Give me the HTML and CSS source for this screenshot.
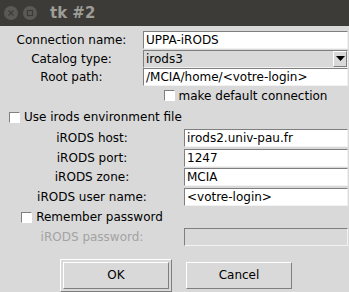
FILE: index.html
```html
<!DOCTYPE html>
<html lang="en">
<head>
<meta charset="utf-8">
<title>tk #2</title>
<link rel="stylesheet" href="styles.css">
</head>
<body>
<div class="window">
  <div class="titlebar">
    <span class="wbtn"><svg width="14" height="14" viewBox="0 0 14 14"><circle cx="7" cy="7" r="7" fill="#5a5955"/><path d="M4.5 4.5 L9.5 9.5 M9.5 4.5 L4.5 9.5" stroke="#3c3b37" stroke-width="1.3"/></svg></span>
    <span class="wbtn"><svg width="14" height="14" viewBox="0 0 14 14"><circle cx="7" cy="7" r="7" fill="#5a5955"/><rect x="4.5" y="4.5" width="5" height="5" fill="none" stroke="#3c3b37" stroke-width="1.2"/></svg></span>
    <span class="title">tk #2</span>
  </div>

  <div class="grid top">
    <label class="lbl">Connection name:</label>
    <div class="entry">UPPA-iRODS</div>
    <label class="lbl">Catalog type:</label>
    <div class="combo"><span>irods3</span><span class="arrow"><svg width="9" height="5" viewBox="0 0 9 5"><path d="M0 0 H9 L4.5 5 Z" fill="#000"/></svg></span></div>
    <label class="lbl">Root path:</label>
    <div class="entry">/MCIA/home/&lt;votre-login&gt;</div>
    <span></span>
    <div class="check center"><span class="box"></span>make default connection</div>
  </div>

  <div class="check env"><span class="box"></span>Use irods environment file</div>

  <div class="grid bottom">
    <label class="lbl">iRODS host:</label>
    <div class="entry">irods2.univ-pau.fr</div>
    <label class="lbl">iRODS port:</label>
    <div class="entry">1247</div>
    <label class="lbl">iRODS zone:</label>
    <div class="entry">MCIA</div>
    <label class="lbl">iRODS user name:</label>
    <div class="entry">&lt;votre-login&gt;</div>
    <div class="check center"><span class="box"></span>Remember password</div>
    <span></span>
    <label class="lbl disabled">iRODS password:</label>
    <div class="entry off"></div>
  </div>

  <div class="buttons">
    <div class="ring"><button class="btn" type="button">OK</button></div>
    <button class="btn" type="button">Cancel</button>
  </div>
</div>
</body>
</html>
```
FILE: styles.css
```css
body { margin: 0; padding: 0; background: #d9d9d9; font-family: "DejaVu Sans", sans-serif; font-size: 12px; color: #000; }

.window { width: 349px; height: 292px; overflow: hidden; background: #d9d9d9; }

/* title bar */
.titlebar { height: 26px; background: #3c3b37; display: flex; align-items: center; padding-left: 4px; }
.wbtn { width: 14px; height: 14px; margin-right: 5px; display: flex; }
.wbtn + .wbtn { margin-right: 0; }
.title { margin-left: 13px; color: #9e9d98; font-weight: bold; font-size: 15px; }

/* grids */
.grid { display: grid; align-items: center; padding-right: 1px; }
.top { grid-template-columns: 143px 1fr; grid-auto-rows: 18.5px; padding-top: 5px; }
.bottom { grid-template-columns: 184px 1fr; grid-auto-rows: 19.8px; margin-top: 1px; }

.lbl { text-align: center; line-height: 18px; white-space: nowrap; }
.lbl.disabled { color: #a3a3a3; }

.entry { height: 18px; box-sizing: border-box; background: #fff; border: 1px solid; border-color: #7f7f7f #f2f2f2 #f2f2f2 #7f7f7f; padding-left: 2px; line-height: 16px; white-space: nowrap; overflow: hidden; }
.entry.off { background: #d9d9d9; }

.combo { height: 18px; box-sizing: border-box; display: flex; justify-content: space-between; background: #d9d9d9; border: 1px solid; border-color: #7f7f7f #f2f2f2 #f2f2f2 #7f7f7f; padding-left: 2px; line-height: 16px; }
.arrow { width: 14px; box-sizing: border-box; border: 1px solid; border-color: #fff #7f7f7f #7f7f7f #fff; display: flex; align-items: center; justify-content: center; }

/* checkbuttons */
.check { display: flex; align-items: center; white-space: nowrap; }
.check.center { justify-content: center; }
.box { width: 11px; height: 11px; box-sizing: border-box; background: #fff; border: 1px solid; border-color: #7f7f7f #fff #fff #7f7f7f; margin-right: 4px; }
.env { height: 20px; padding-left: 9px; margin-top: 2px; }

/* buttons */
.buttons { display: flex; align-items: center; padding-left: 60px; margin-top: 12px; gap: 14px; }
.ring { border: 1px solid; border-color: #fff #7f7f7f #7f7f7f #fff; padding: 2px; }
.btn { width: 106px; height: 27px; box-sizing: border-box; background: #d9d9d9; border: 1px solid; border-color: #fff #7f7f7f #7f7f7f #fff; font-family: "DejaVu Sans", sans-serif; font-size: 12px; color: #000; padding: 0; }
```
